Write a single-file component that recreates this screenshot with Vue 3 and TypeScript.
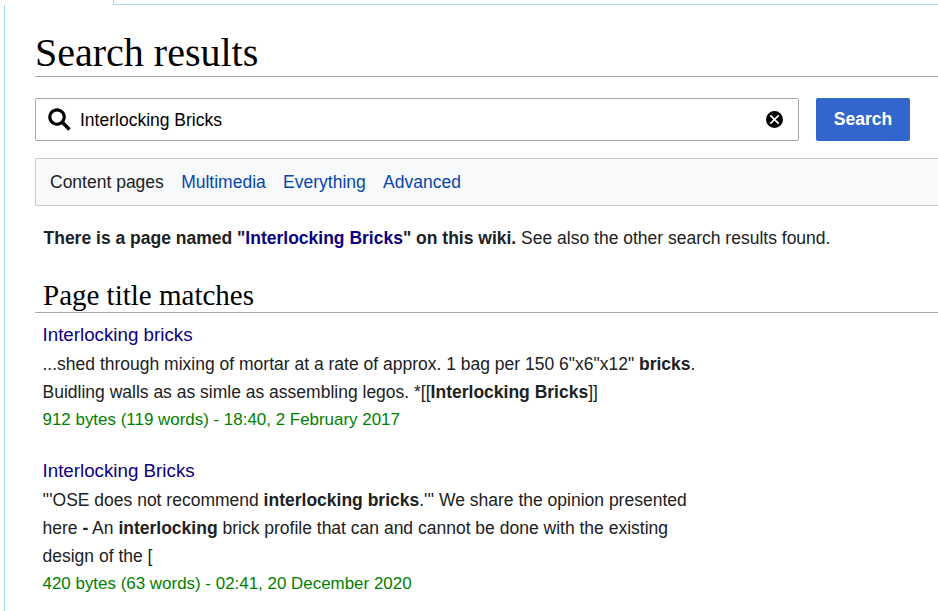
<script setup lang="ts">
interface Piece {
  text: string
  bold?: boolean
}

interface Result {
  title: string
  lines: Piece[][]
  meta: string
}

const query = 'Interlocking Bricks'

const profiles = [
  { label: 'Content pages', active: true },
  { label: 'Multimedia', active: false },
  { label: 'Everything', active: false },
  { label: 'Advanced', active: false }
]

const results: Result[] = [
  {
    title: 'Interlocking bricks',
    lines: [
      [
        { text: '...shed through mixing of mortar at a rate of approx. 1 bag per 150 6"x6"x12" ' },
        { text: 'bricks', bold: true },
        { text: '.' }
      ],
      [
        { text: 'Buidling walls as as simle as assembling legos. *[[' },
        { text: 'Interlocking Bricks', bold: true },
        { text: ']]' }
      ]
    ],
    meta: '912 bytes (119 words) - 18:40, 2 February 2017'
  },
  {
    title: 'Interlocking Bricks',
    lines: [
      [
        { text: "'''OSE does not recommend " },
        { text: 'interlocking bricks', bold: true },
        { text: ".''' We share the opinion presented" }
      ],
      [
        { text: 'here ' },
        { text: '-', bold: true },
        { text: ' An ' },
        { text: 'interlocking', bold: true },
        { text: ' brick profile that can and cannot be done with the existing' }
      ],
      [{ text: 'design of the [' }]
    ],
    meta: '420 bytes (63 words) - 02:41, 20 December 2020'
  }
]
</script>

<template>
  <div class="page">
    <div class="tabs">
      <div class="tab"></div>
      <div class="tab-rest"></div>
    </div>
    <main class="content">
      <h1 class="title">Search results</h1>

      <form class="search" @submit.prevent>
        <div class="search-box">
          <svg class="search-icon" width="25" height="25" viewBox="0 0 20 20">
            <path d="M19 17l-5.15-5.15a7 7 0 1 0-2 2L17 19zM3.5 8A4.5 4.5 0 1 1 8 12.5 4.5 4.5 0 0 1 3.5 8z" />
          </svg>
          <input class="search-input" type="text" :value="query" />
          <svg class="clear-icon" width="17" height="17" viewBox="0 0 20 20">
            <path d="M10 0a10 10 0 1 0 0 20 10 10 0 0 0 0-20zm5.66 14.24-1.41 1.41L10 11.41l-4.24 4.24-1.42-1.41L8.59 10 4.34 5.76l1.42-1.42L10 8.59l4.25-4.25 1.41 1.42L11.41 10z" />
          </svg>
        </div>
        <button class="search-button" type="submit">Search</button>
      </form>

      <nav class="profiles">
        <a
          v-for="profile in profiles"
          :key="profile.label"
          class="profile"
          :class="{ active: profile.active }"
        >{{ profile.label }}</a>
      </nav>

      <p class="notice">
        <b>There is a page named "<a class="visited">Interlocking Bricks</a>" on this wiki.</b>
        See also the other search results found.
      </p>

      <h2 class="section">Page title matches</h2>

      <ul class="results">
        <li v-for="result in results" :key="result.title" class="result">
          <a class="result-title visited">{{ result.title }}</a>
          <div v-for="(line, i) in result.lines" :key="i" class="snippet">
            <template v-for="(piece, j) in line" :key="j">
              <b v-if="piece.bold">{{ piece.text }}</b>
              <template v-else>{{ piece.text }}</template>
            </template>
          </div>
          <div class="meta">{{ result.meta }}</div>
        </li>
      </ul>
    </main>
  </div>
</template>

<style>
html,
body {
  margin: 0;
  background: #fff;
  overflow: hidden;
}
</style>

<style scoped>
.page {
  width: 938px;
  height: 611px;
  overflow: hidden;
  font-family: "Liberation Sans", Arial, sans-serif;
  font-size: 17.5px;
  color: #202122;
  background: #fff;
}

.tabs {
  display: flex;
  height: 5px;
}

.tab {
  width: 113px;
  flex: none;
}

.tab-rest {
  flex: 1;
  border-left: 1px solid #a7d7f9;
  border-bottom: 1px solid #a7d7f9;
}

.content {
  margin-left: 4px;
  padding-left: 30px;
  height: 606px;
  border-left: 1px solid #a7d7f9;
}

.title {
  margin: 0;
  padding-top: 25px;
  height: 46px;
  font-family: "Liberation Serif", serif;
  font-size: 40px;
  font-weight: 400;
  line-height: 46px;
  color: #000;
  border-bottom: 1px solid #a2a9b1;
}

.search {
  display: flex;
  gap: 17px;
  margin-top: 21px;
}

.search-box {
  display: flex;
  align-items: center;
  width: 762px;
  height: 41px;
  border: 1px solid #a2a9b1;
  border-radius: 2px;
}

.search-icon {
  margin-left: 11px;
  margin-right: 8px;
  flex: none;
}

.clear-icon {
  margin-right: 15px;
  margin-bottom: 1px;
  flex: none;
}

.search-input {
  flex: 1;
  min-width: 0;
  padding: 2px 0 0;
  border: none;
  outline: none;
  font: inherit;
  color: #000;
  background: transparent;
}

.search-button {
  width: 94px;
  height: 43px;
  padding: 0;
  border: none;
  border-radius: 2px;
  font: inherit;
  font-weight: 700;
  color: #fff;
  background: #36c;
}

.profiles {
  display: flex;
  gap: 17.3px;
  align-items: center;
  box-sizing: border-box;
  height: 48px;
  width: 904px;
  margin-top: 17px;
  padding-left: 14px;
  border: 1px solid #c8ccd1;
  border-right: none;
  border-radius: 2px 0 0 2px;
  background: #f8f9fa;
}

.profile {
  color: #0645ad;
}

.profile.active {
  color: #202122;
}

.notice {
  margin: 18px 0 0 8.5px;
  line-height: 28px;
}

.visited {
  color: #0b0080;
}

.section {
  margin: 26px 0 0;
  height: 34px;
  padding-left: 8px;
  font-family: "Liberation Serif", serif;
  font-size: 29px;
  font-weight: 400;
  line-height: 34px;
  color: #000;
  border-bottom: 1px solid #a2a9b1;
}

.results {
  list-style: none;
  margin: 7px 0 0 7.5px;
  padding: 0;
}

.result {
  margin-bottom: 22px;
}

.result-title {
  display: block;
  font-size: 18.75px;
  line-height: 30px;
}

.snippet {
  line-height: 28px;
}

.meta {
  font-size: 16.95px;
  line-height: 28px;
  color: #008000;
}
</style>
